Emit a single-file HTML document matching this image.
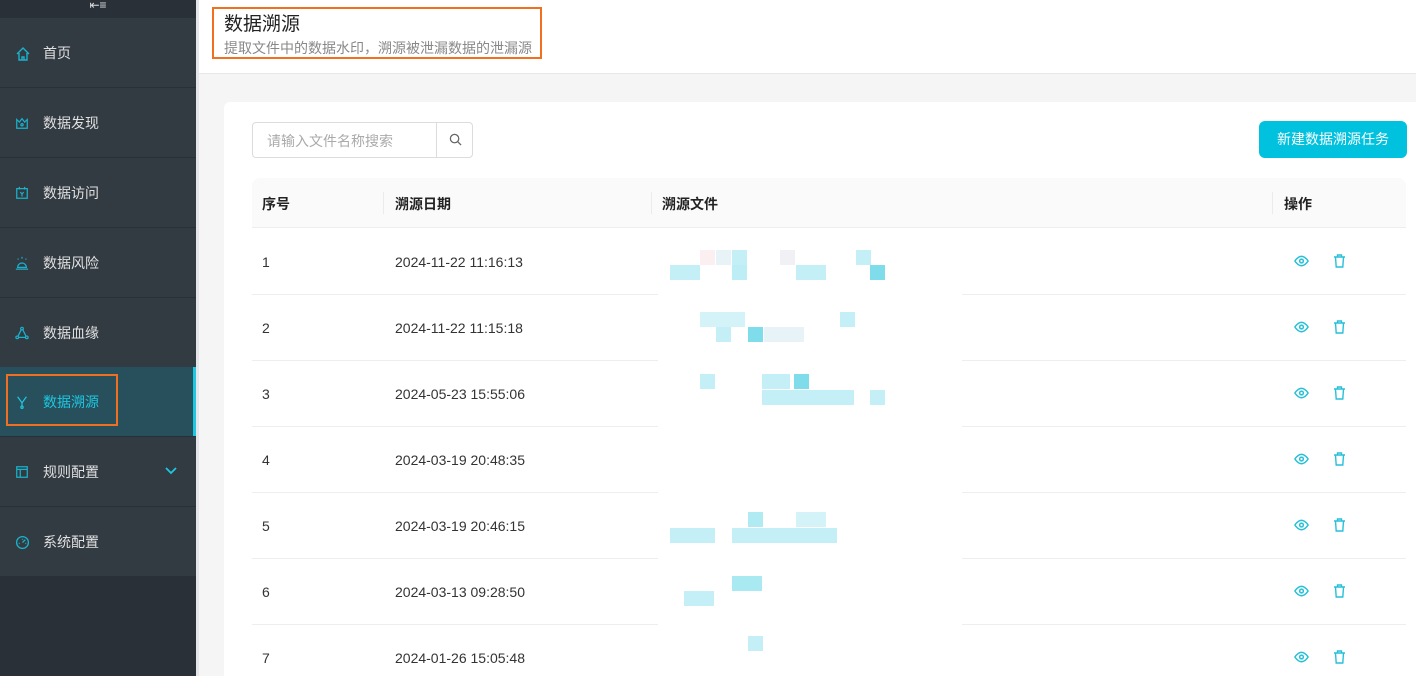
<!DOCTYPE html>
<html><head><meta charset="utf-8"><style>
*{margin:0;padding:0;box-sizing:border-box}
html,body{width:1416px;height:676px;overflow:hidden}
body{font-family:"Liberation Sans","Noto Sans CJK SC",sans-serif;background:#f5f5f5;position:relative}
.sb{position:absolute;left:0;top:0;width:196px;height:676px;background:#2a3037}
.sb .top{height:18px;background:#2a3038;text-align:center;color:#ddd;font-size:12px;line-height:10px}
.it{position:absolute;left:0;width:196px;height:70px;background:#323a42;border-bottom:1px solid #2a3037;color:#e0e0e0;font-size:14px;display:flex;align-items:center;padding-left:43px}
.it svg{position:absolute;left:15px;top:28px}
.it.act{background:#27505c;color:#1ec6e0}
.it.act::after{content:"";position:absolute;right:0;top:0;width:3px;height:100%;background:#1ec6e0}
.scr{position:absolute;left:196px;top:0;width:3px;height:676px;background:#e4e6ea}
.hd{position:absolute;left:199px;top:0;right:0;height:74px;background:#fff;border-bottom:1px solid #e8e8e8}
.box{position:absolute;border:2px solid #f07020}
.card{position:absolute;left:224px;top:102px;width:1192px;height:574px;background:#fff;border-radius:6px 0 0 0}
.th{position:absolute;left:252px;top:178px;width:1154px;height:50px;background:#fafafa;border-radius:8px 8px 0 0;border-bottom:1px solid #eee;font-size:14px;font-weight:bold;color:#222}
.th span,.row span{position:absolute;top:0}
.th i{position:absolute;top:14px;width:1px;height:22px;background:#ebebeb}
.row{position:absolute;left:252px;width:1154px;height:66px;border-bottom:1px solid #eee;font-size:14px;color:#333;line-height:66px}
.row span.ic{line-height:0}
.row svg{display:block}
.mk{position:absolute;width:16px;height:15px}
</style></head><body>
<div class="sb"><div class="top">⇤≡</div></div>
<div class="it" style="top:18px"><svg width="16" height="16" viewBox="0 0 16 16" fill="none" stroke="#1ab3cc" stroke-width="1.4"><path d="M2 8L8 2l6 6M4 7v7h8V7M7 14v-3h2v3"/></svg>首页</div>
<div class="it" style="top:88px"><svg width="14" height="14" viewBox="0 0 16 16" fill="none" stroke="#1ab3cc" stroke-width="1.4"><path d="M2 4l3 3 3-4 3 4 3-3v10H2z"/><circle cx="8" cy="10" r="1.3"/></svg>数据发现</div>
<div class="it" style="top:158px"><svg width="14" height="14" viewBox="0 0 16 16" fill="none" stroke="#1ab3cc" stroke-width="1.4"><rect x="2" y="3" width="12" height="11"/><path d="M5 1v3M11 1v3M6 7l2 2 2-2M8 9v3"/></svg>数据访问</div>
<div class="it" style="top:228px"><svg width="14" height="14" viewBox="0 0 16 16" fill="none" stroke="#1ab3cc" stroke-width="1.4"><path d="M3 13a5 5 0 0110 0zM1 15h14M8 1v2M3 3l1 1M13 3l-1 1"/></svg>数据风险</div>
<div class="it" style="top:298px"><svg width="14" height="14" viewBox="0 0 16 16" fill="none" stroke="#1ab3cc" stroke-width="1.4"><circle cx="8" cy="3" r="1.5"/><circle cx="2.5" cy="13" r="1.5"/><circle cx="13.5" cy="13" r="1.5"/><path d="M7 4.5L3.5 11.5M9 4.5l3.5 7M4 13h8"/></svg>数据血缘</div>
<div class="it act" style="top:367px"><svg width="14" height="14" viewBox="0 0 16 16" fill="none" stroke="#1ec6e0" stroke-width="1.4"><path d="M3 2l5 7 5-7M8 9v4"/><circle cx="8" cy="14" r="1.3"/></svg>数据溯源</div>
<div class="box" style="left:6px;top:374px;width:112px;height:52px"></div>
<div class="it" style="top:437px"><svg width="14" height="14" viewBox="0 0 16 16" fill="none" stroke="#1ab3cc" stroke-width="1.4"><rect x="2" y="2" width="12" height="12"/><path d="M2 5h12M6 5v9"/></svg>规则配置<svg style="left:165px;top:30px" width="12" height="8" viewBox="0 0 12 8" fill="none" stroke="#1ec6e0" stroke-width="1.8"><path d="M1 1l5 5 5-5"/></svg></div>
<div class="it" style="top:507px"><svg width="15" height="15" viewBox="0 0 16 16" fill="none" stroke="#1ab3cc" stroke-width="1.4"><circle cx="8" cy="8" r="6.3"/><path d="M8 8l3-3M4 9h1M11 9h1M8 4v1"/></svg>系统配置</div>
<div class="scr"></div>
<div class="hd">
<div style="position:absolute;left:25px;top:9px;font-size:19px;color:#222">数据溯源</div>
<div style="position:absolute;left:25px;top:38px;font-size:14px;color:#888">提取文件中的数据水印，溯源被泄漏数据的泄漏源</div>
</div>
<div class="box" style="left:212px;top:7px;width:330px;height:52px"></div>
<div class="card"></div>
<div style="position:absolute;left:252px;top:122px;width:221px;height:36px;border:1px solid #dcdcdc;border-radius:4px;background:#fff">
<span style="position:absolute;left:14px;top:8px;font-size:14px;color:#aaa">请输入文件名称搜索</span>
<div style="position:absolute;left:183px;top:-1px;width:37px;height:36px;border-left:1px solid #dcdcdc"><svg style="position:absolute;left:12px;top:11px" width="13" height="13" viewBox="0 0 14 14" fill="none" stroke="#666" stroke-width="1.4"><circle cx="6" cy="6" r="4.5"/><path d="M9.5 9.5L13 13"/></svg></div></div>
<div style="position:absolute;left:1259px;top:121px;width:148px;height:37px;background:#00c1de;border-radius:6px;color:#fff;font-size:14px;text-align:center;line-height:37px">新建数据溯源任务</div>
<div class="th"><span style="left:10px;top:16px">序号</span><i style="left:131px"></i><span style="left:143px;top:16px">溯源日期</span><i style="left:399px"></i><span style="left:410px;top:16px">溯源文件</span><i style="left:1020px"></i><span style="left:1032px;top:16px">操作</span></div>
<div id="rows"></div>
<script>
var d=["2024-11-22 11:16:13","2024-11-22 11:15:18","2024-05-23 15:55:06","2024-03-19 20:48:35","2024-03-19 20:46:15","2024-03-13 09:28:50","2024-01-26 15:05:48"];
var h="";d.forEach(function(t,i){h+='<div class="row" style="top:'+(229+i*66)+'px"><span style="left:10px">'+(i+1)+'</span><span style="left:143px">'+t+'</span><span class="ic" style="left:1042px;top:26px"><svg width="15" height="12" viewBox="0 0 16 12" fill="none" stroke="#27c0d8" stroke-width="1.6"><path d="M1 6s3-5 7-5 7 5 7 5-3 5-7 5-7-5-7-5z"/><circle cx="8" cy="6" r="2"/></svg></span><span class="ic" style="left:1081px;top:25px"><svg width="13" height="14" viewBox="0 0 13 14" fill="none" stroke="#27c0d8" stroke-width="1.4"><path d="M1 3h11M4.5 3V1h4v2M2.5 3l.7 10h6.6l.7-10"/></svg></span></div>'});
h+='<div style="position:absolute;left:658px;top:294px;width:304px;height:382px;background:#fff"></div>';
var m=[[670,265,"#c4eff6",30],[700,250,"#fbeff2",15],[716,250,"#e8f3f8",15],[732,250,"#c4eff6",15],[732,265,"#bdeef6",15],[780,250,"#f0f0f5",15],[796,265,"#c4eff6",30],[856,250,"#c4eff6",15],[870,265,"#7fdcea",15],[700,312,"#d4f3f8",45],[716,327,"#c4eff6",15],[748,327,"#7fdcea",15],[764,327,"#e8f3f8",40],[840,312,"#c4eff6",15],[700,374,"#c4eff6",15],[762,374,"#c4eff6",28],[794,374,"#7fdcea",15],[762,390,"#c4eff6",92],[870,390,"#c4eff6",15],[670,528,"#c4eff6",45],[748,512,"#b0eaf3",15],[732,528,"#c4eff6",105],[796,512,"#d4f3f8",30],[732,576,"#a8e9f2",30],[684,591,"#c4eff6",30],[748,636,"#c4eff6",15]];
m.forEach(function(a){h+='<div class="mk" style="left:'+a[0]+'px;top:'+a[1]+'px;width:'+a[3]+'px;background:'+a[2]+'"></div>'});
document.getElementById("rows").innerHTML=h;
</script>
</body></html>
